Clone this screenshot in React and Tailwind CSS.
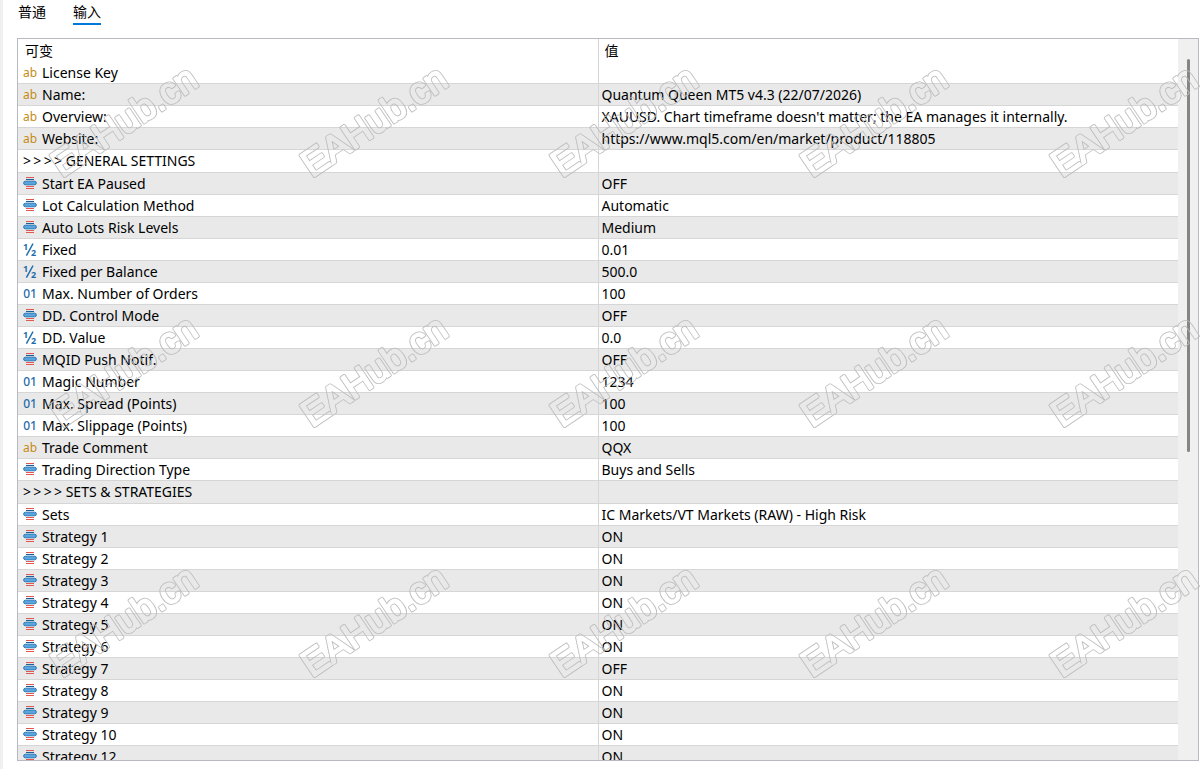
import { useState } from 'react';

const tabs = ['普通', '输入'];

const inputs = [
    { type: 'string', name: 'License Key', value: '' },
    { type: 'string', name: 'Name:', value: 'Quantum Queen MT5 v4.3 (22/07/2026)' },
    { type: 'string', name: 'Overview:', value: "XAUUSD. Chart timeframe doesn't matter; the EA manages it internally." },
    { type: 'string', name: 'Website:', value: 'https://www.mql5.com/en/market/product/118805' },
    { type: 'section', name: 'GENERAL SETTINGS', value: '' },
    { type: 'enum', name: 'Start EA Paused', value: 'OFF' },
    { type: 'enum', name: 'Lot Calculation Method', value: 'Automatic' },
    { type: 'enum', name: 'Auto Lots Risk Levels', value: 'Medium' },
    { type: 'double', name: 'Fixed', value: '0.01' },
    { type: 'double', name: 'Fixed per Balance', value: '500.0' },
    { type: 'int', name: 'Max. Number of Orders', value: '100' },
    { type: 'enum', name: 'DD. Control Mode', value: 'OFF' },
    { type: 'double', name: 'DD. Value', value: '0.0' },
    { type: 'enum', name: 'MQID Push Notif.', value: 'OFF' },
    { type: 'int', name: 'Magic Number', value: '1234' },
    { type: 'int', name: 'Max. Spread (Points)', value: '100' },
    { type: 'int', name: 'Max. Slippage (Points)', value: '100' },
    { type: 'string', name: 'Trade Comment', value: 'QQX' },
    { type: 'enum', name: 'Trading Direction Type', value: 'Buys and Sells' },
    { type: 'section', name: 'SETS & STRATEGIES', value: '' },
    { type: 'enum', name: 'Sets', value: 'IC Markets/VT Markets (RAW) - High Risk' },
    { type: 'enum', name: 'Strategy 1', value: 'ON' },
    { type: 'enum', name: 'Strategy 2', value: 'ON' },
    { type: 'enum', name: 'Strategy 3', value: 'ON' },
    { type: 'enum', name: 'Strategy 4', value: 'ON' },
    { type: 'enum', name: 'Strategy 5', value: 'ON' },
    { type: 'enum', name: 'Strategy 6', value: 'ON' },
    { type: 'enum', name: 'Strategy 7', value: 'OFF' },
    { type: 'enum', name: 'Strategy 8', value: 'ON' },
    { type: 'enum', name: 'Strategy 9', value: 'ON' },
    { type: 'enum', name: 'Strategy 10', value: 'ON' },
    { type: 'enum', name: 'Strategy 12', value: 'ON' },
];

const EnumIcon = () => (
    <svg width="14" height="14" viewBox="0 0 14 14" aria-hidden="true">
        <path d="M3 1.5h8M3 10.5h8M3 12.5h8" stroke="#e2574f" strokeWidth="1.1" />
        <path d="M3 3.5h8" stroke="#1f5f96" strokeWidth="1.1" />
        <rect x="0.6" y="5.2" width="12.8" height="3.6" rx="1.8" fill="#5aa5dc" stroke="#2474b5" strokeWidth="0.9" />
    </svg>
);

const FractionIcon = () => (
    <svg className="overflow-visible" width="14" height="16" viewBox="0 0 14 16" aria-hidden="true" fill="#1f6cab" fontFamily="Noto Sans, sans-serif" fontSize="9" fontWeight="700">
        <text x="0" y="8">1</text>
        <text x="8" y="14">2</text>
        <path d="M3.4 13.6L10 1.6" stroke="#1f6cab" strokeWidth="1.4" />
    </svg>
);

const TypeIcon = ({ type }) => {
    if (type === 'string') return <span className="text-xs leading-4 text-[#c58a17]">ab</span>;
    if (type === 'int') return <span className="text-xs leading-4 font-medium text-[#1f6cab]">01</span>;
    if (type === 'double') return <FractionIcon />;
    return <EnumIcon />;
};

const InputRow = ({ input }) => (
    <tr className="border-b border-[#d6d6d6] even:bg-[#e9e9e9]">
        <td className="border-r border-[#d6d6d6] p-0">
            {input.type === 'section' ? (
                <div className="flex h-[22px] items-center pl-[5px]">
                    {'>\u2006>\u2006>\u2006>'} {input.name}
                </div>
            ) : (
                <div className="flex h-[21px] items-center gap-1 pl-1">
                    <span className="flex h-5 w-4 shrink-0 items-start justify-center pt-0.5">
                        <TypeIcon type={input.type} />
                    </span>
                    {input.name}
                </div>
            )}
        </td>
        <td className="p-0 pl-[3px]">{input.value}</td>
    </tr>
);

// Outlined watermark, repeated over the whole window
const Watermark = () => (
    <svg className="pointer-events-none absolute inset-0 h-full w-full" aria-hidden="true">
        <defs>
            <mask id="hollow" maskUnits="userSpaceOnUse" x="-10" y="-50" width="220" height="80">
                <g fontFamily="Liberation Sans, sans-serif" fontSize="37" strokeLinejoin="round">
                    <text fill="white" stroke="white" strokeWidth="3.4">EAHub.cn</text>
                    <text fill="black" stroke="black" strokeWidth="1.8">EAHub.cn</text>
                </g>
            </mask>
            <pattern id="marks" width="250" height="250" patternUnits="userSpaceOnUse">
                <g transform="translate(59 178) rotate(-34)">
                    <rect x="-10" y="-50" width="220" height="80" fill="#bcbcbc" mask="url(#hollow)" />
                </g>
            </pattern>
        </defs>
        <rect width="100%" height="100%" fill="url(#marks)" />
    </svg>
);

export default function App() {
    const [active, setActive] = useState('输入');

    return (
        <div className="relative flex h-screen flex-col overflow-hidden border-l-3 border-[#f0f0f0] bg-white pr-px pb-2 pl-3.5 font-['Noto_Sans','Noto_Sans_CJK_SC',sans-serif] text-sm text-black">
            <nav className="flex h-[38px] shrink-0 items-start gap-[27px] pt-0.5 pl-px">
                {tabs.map((tab) => (
                    <button
                        key={tab}
                        type="button"
                        onClick={() => setActive(tab)}
                        className={`border-b-2 pb-px leading-5 ${active === tab ? 'border-[#0078d7]' : 'border-transparent'}`}
                    >
                        {tab}
                    </button>
                ))}
            </nav>

            <div className="flex min-h-0 flex-1 overflow-hidden border border-[#b9b9c2]">
                <div className="min-w-0 flex-1 overflow-hidden">
                    <table className="w-full table-fixed border-collapse text-left leading-5 whitespace-nowrap">
                        <thead>
                            <tr className="h-[23px]">
                                <th className="w-1/2 border-r border-[#d6d6d6] p-0 pl-[7px] font-normal">可变</th>
                                <th className="w-1/2 p-0 pl-1.5 font-normal">值</th>
                            </tr>
                        </thead>
                        <tbody>
                            {inputs.map((input) => (
                                <InputRow key={input.name} input={input} />
                            ))}
                        </tbody>
                    </table>
                </div>
                <div className="flex w-5 shrink-0 justify-center bg-[#f0f0f0] pt-5">
                    <div className="h-[56%] w-[3px] rounded-full bg-[#858585]" />
                </div>
            </div>

            <Watermark />
        </div>
    );
}
